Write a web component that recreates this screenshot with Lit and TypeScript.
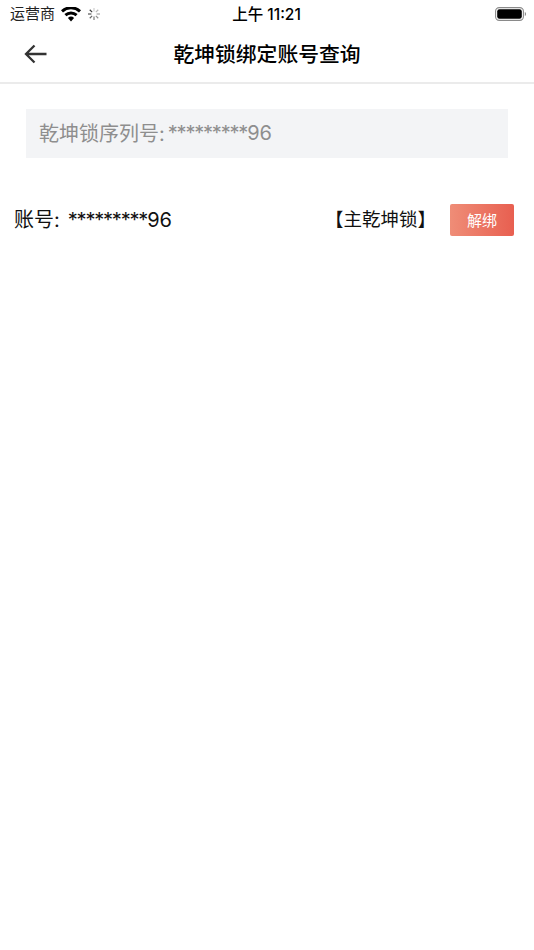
import { LitElement, html, css, svg } from "lit";
import { customElement } from "lit/decorators.js";

const spokes = [0, 45, 90, 135, 180, 225, 270, 315];

@customElement("app-root")
export class AppRoot extends LitElement {
  static styles = css`
    :host {
      display: block;
      width: 534px;
      height: 950px;
      background: #fff;
      color: #000;
      font-family: Inter, "Noto Sans CJK SC", sans-serif;
      overflow: hidden;
    }
    .status {
      height: 28px;
      display: grid;
      grid-template-columns: 1fr auto 1fr;
      align-items: center;
      padding: 0 8px 0 10px;
      box-sizing: border-box;
    }
    .left { display: flex; align-items: center; gap: 6px; }
    .carrier { font-size: 15px; color: #222; padding-bottom: 3px; }
    .time { font-size: 15.5px; font-weight: 500; padding-bottom: 2px; margin-right: 3px; }
    .right { display: flex; justify-content: flex-end; }
    .nav {
      height: 56px;
      box-sizing: border-box;
      border-bottom: 2px solid #ebebeb;
      display: grid;
      grid-template-columns: 1fr auto 1fr;
      align-items: center;
      padding: 0 24px 2px;
    }
    .back { display: block; }
    .title { font-size: 20.8px; font-weight: 500; color: #000; padding-bottom: 2px; }
    .search {
      margin: 25px 26px 0;
      height: 49px;
      box-sizing: border-box;
      background: #f3f4f6;
      display: flex;
      align-items: center;
      padding: 0 0 2px 13px;
      font-size: 20px;
      color: #8e8e8e;
    }
    .label { margin-right: 3px; }
    .stars { letter-spacing: -1.2px; }
    .row {
      margin-top: 46px;
      padding: 0 20px 0 14px;
      display: flex;
      align-items: center;
      font-size: 20px;
      color: #111;
    }
    .account { flex: 1; padding-bottom: 3px; }
    .sep { margin-right: 8px; }
    .tag { margin-right: 14px; font-size: 18.5px; padding-bottom: 4px; }
    .unbind {
      width: 64px;
      height: 32px;
      box-sizing: border-box;
      padding-bottom: 2px;
      border-radius: 2px;
      background: linear-gradient(90deg, #ef8d77, #e85f50);
      color: #fff;
      font-size: 15px;
      display: flex;
      align-items: center;
      justify-content: center;
    }
  `;

  render() {
    return html`
      <div class="status">
        <div class="left">
          <span class="carrier">运营商</span>
          <svg width="20" height="15" viewBox="0 0 20 15">
            <path d="M10 14.5 6.9 11a4.6 4.6 0 0 1 6.2 0Z" fill="#000"/>
            <path d="M5.4 9.3 3.4 7a9.8 9.8 0 0 1 13.2 0l-2 2.3a6.8 6.8 0 0 0-9.2 0Z" fill="#000"/>
            <path d="M2 5.4 0 3.2a14.8 14.8 0 0 1 20 0l-2 2.2a11.8 11.8 0 0 0-16 0Z" fill="#000"/>
          </svg>
          <svg width="14" height="14" viewBox="0 0 14 14">
            ${spokes.map(
              (a, i) => svg`<line
                x1="7" y1="1" x2="7" y2="4.4"
                stroke="#000" stroke-width="1.2"
                stroke-opacity=${0.2 + i * 0.08}
                transform=${`rotate(${a} 7 7)`}
              />`
            )}
          </svg>
        </div>
        <div class="time">上午 11:21</div>
        <div class="right">
          <svg width="31" height="14" viewBox="0 0 31 14">
            <rect x="0.6" y="0.6" width="27.8" height="12.8" rx="3.6" fill="none" stroke="#8a8a8a" stroke-width="1.1"/>
            <rect x="2.2" y="2.2" width="24.6" height="9.6" rx="2.2" fill="#000"/>
            <path d="M29.8 5v4c.8-.3 1.2-1.1 1.2-2s-.4-1.7-1.2-2Z" fill="#8a8a8a"/>
          </svg>
        </div>
      </div>
      <div class="nav">
        <svg class="back" width="24" height="20" viewBox="0 0 24 20">
          <path d="M22.5 10H2M10.5 1.5 2 10l8.5 8.5" fill="none" stroke="#333" stroke-width="2.3"/>
        </svg>
        <div class="title">乾坤锁绑定账号查询</div>
        <div></div>
      </div>
      <div class="search"><span class="label">乾坤锁序列号:</span><span class="stars">*********</span>96</div>
      <div class="row">
        <div class="account"><span class="sep">账号:</span><span class="stars">*********</span>96</div>
        <div class="tag">【主乾坤锁】</div>
        <div class="unbind">解绑</div>
      </div>
    `;
  }
}
